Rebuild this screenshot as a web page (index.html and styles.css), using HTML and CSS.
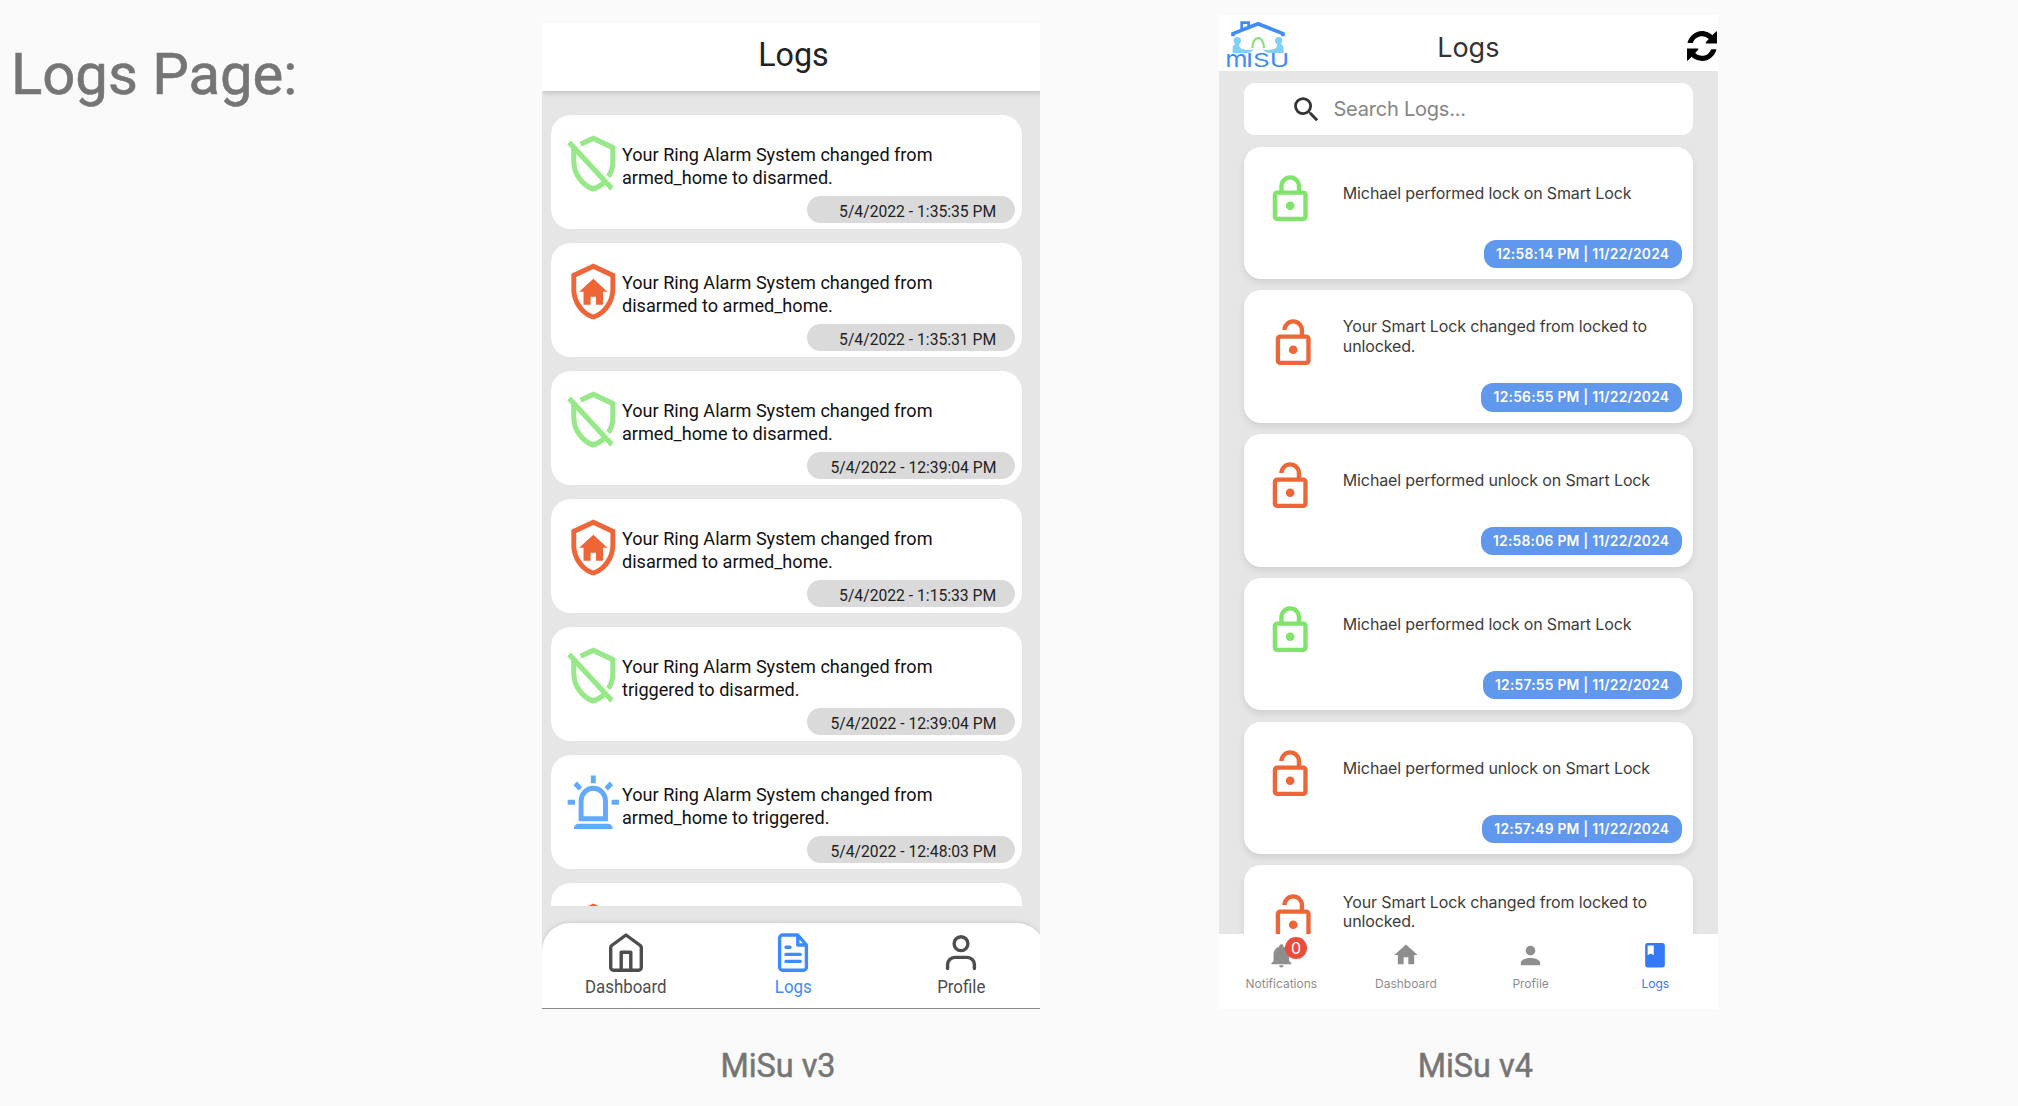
FILE: index.html
```html
<!DOCTYPE html>
<html lang="en">
<head>
<meta charset="utf-8">
<title>Logs Page</title>
<link rel="stylesheet" href="styles.css">
</head>
<body>
<svg class="defs" aria-hidden="true">
  <symbol id="shield-off" viewBox="0 0 24 24" preserveAspectRatio="none"><g fill="none" stroke="currentColor" stroke-width="2.1"><path d="M6.8 4.4 12 2.1l8 3.6v5.5c0 2-.6 4.1-1.8 5.9"/><path d="M4 5.2v5.9c0 4.8 3.4 9.5 8 10.9 1.9-.5 3.5-1.6 4.8-3"/><path d="M2.1 3.7 19.6 21.9"/></g></symbol>
  <symbol id="shield-home" viewBox="0 0 24 24" preserveAspectRatio="none"><path fill="currentColor" d="M21 11c0 5.55-3.84 10.74-9 12-5.16-1.26-9-6.45-9-12V5l9-4 9 4v6m-9 10c3.75-1 7-5.46 7-9.78V6.3l-7-3.12L5 6.3v4.92C5 15.54 8.25 20 12 21m0-14 5.8 5.1H16v5.1h-2.9v-3.1h-2.2v3.1H8v-5.1H6.2z"/></symbol>
  <symbol id="alarm" viewBox="0 0 24 24" preserveAspectRatio="none"><path fill="currentColor" d="M6 6.9 3.87 4.78 5.28 3.37 7.4 5.5 6 6.9M13 1v3h-2V1h2m7.13 3.78L18 6.9l-1.4-1.4 2.12-2.13 1.41 1.41M4.5 10.5v2h-3v-2h3m15 0h3v2h-3v-2M6 20h12a2 2 0 0 1 2 2H4a2 2 0 0 1 2-2m6-15a6 6 0 0 1 6 6v8H6v-8a6 6 0 0 1 6-6m0 2a4 4 0 0 0-4 4v6h8v-6a4 4 0 0 0-4-4z"/></symbol>
  <symbol id="lock" viewBox="0 0 24 24"><path fill="currentColor" d="M12 17a2 2 0 1 1 0-4 2 2 0 0 1 0 4m6 3V10H6v10h12m0-12a2 2 0 0 1 2 2v10a2 2 0 0 1-2 2H6a2 2 0 0 1-2-2V10c0-1.11.89-2 2-2h1V6a5 5 0 0 1 10 0v2h1m-6-5a3 3 0 0 0-3 3v2h6V6a3 3 0 0 0-3-3z"/></symbol>
  <symbol id="unlock" viewBox="0 0 24 24"><path fill="currentColor" d="M18 20V10H6v10h12m0-12a2 2 0 0 1 2 2v10a2 2 0 0 1-2 2H6a2 2 0 0 1-2-2V10a2 2 0 0 1 2-2h9V6a3 3 0 0 0-6 0H7a5 5 0 0 1 10 0v2h1m-6 9a2 2 0 1 1 0-4 2 2 0 0 1 0 4z"/></symbol>
</svg>

<main class="board">
  <h1 class="page-title">Logs Page:</h1>

  <figure class="version">
    <div class="device v3">
      <div class="v3-screen">
        <header class="v3-header"><h2 class="narrow">Logs</h2></header>
        <div class="v3-list">
          <article class="v3-card"><svg class="v3-icon green"><use href="#shield-off"/></svg><p class="v3-text">Your Ring Alarm System changed from<br>armed_home to disarmed.</p><time class="v3-time"><span>5/4/2022 - 1:35:35 PM</span></time></article>
          <article class="v3-card"><svg class="v3-icon orange"><use href="#shield-home"/></svg><p class="v3-text">Your Ring Alarm System changed from<br>disarmed to armed_home.</p><time class="v3-time"><span>5/4/2022 - 1:35:31 PM</span></time></article>
          <article class="v3-card"><svg class="v3-icon green"><use href="#shield-off"/></svg><p class="v3-text">Your Ring Alarm System changed from<br>armed_home to disarmed.</p><time class="v3-time"><span>5/4/2022 - 12:39:04 PM</span></time></article>
          <article class="v3-card"><svg class="v3-icon orange"><use href="#shield-home"/></svg><p class="v3-text">Your Ring Alarm System changed from<br>disarmed to armed_home.</p><time class="v3-time"><span>5/4/2022 - 1:15:33 PM</span></time></article>
          <article class="v3-card"><svg class="v3-icon green"><use href="#shield-off"/></svg><p class="v3-text">Your Ring Alarm System changed from<br>triggered to disarmed.</p><time class="v3-time"><span>5/4/2022 - 12:39:04 PM</span></time></article>
          <article class="v3-card"><svg class="v3-icon blue"><use href="#alarm"/></svg><p class="v3-text">Your Ring Alarm System changed from<br>armed_home to triggered.</p><time class="v3-time"><span>5/4/2022 - 12:48:03 PM</span></time></article>
          <article class="v3-card"><svg class="v3-icon orange"><use href="#shield-home"/></svg></article>
        </div>
        <nav class="v3-nav">
          <a class="v3-tab"><svg viewBox="-22 0 44 45"><path d="M-15.3 16.6v19.9a2.7 2.7 0 0 0 2.7 2.7h25.2a2.7 2.7 0 0 0 2.7-2.7V16.6q0-1.3-1-2.1L0 4l-14.3 10.5q-1 .8-1 2.1zM-4.8 39V21.3h9.6V39"/></svg><span class="narrow">Dashboard</span></a>
          <a class="v3-tab active"><svg viewBox="-22 0 44 45"><path d="M4.8 4h-15.2a3 3 0 0 0-3 3v29.2a3 3 0 0 0 3 3h20.8a3 3 0 0 0 3-3V14zM4.8 4v10h8.6M-7 16.3h4M-7 23.4H7.2M-7 30.4H7.2"/></svg><span class="narrow">Logs</span></a>
          <a class="v3-tab"><svg viewBox="-22 0 44 45"><circle cx="0" cy="12.7" r="6.9"/><path d="M-13.4 37.6v-4a7.2 7.2 0 0 1 7.2-7.2H6.2a7.2 7.2 0 0 1 7.2 7.2v4"/></svg><span class="narrow">Profile</span></a>
        </nav>
      </div>
    </div>
    <figcaption class="caption caption-v3">MiSu v3</figcaption>
  </figure>

  <figure class="version">
    <div class="device v4">
      <header class="v4-header">
        <svg class="logo" viewBox="48 60 190 147">
          <g fill="none" stroke="#3f8cf8"><path stroke-width="8" d="M95 92V68h21v12"/><path stroke-width="11" d="M69 109v-8l75-30 75 30v8"/></g>
          <path fill="none" stroke="#93e08c" stroke-width="7" d="M127 144c1-40 34-40 35 0"/>
          <g fill="#7fd0fa"><circle cx="82" cy="122" r="11"/><path d="M68 159v-17q2-9 9-10h10q2 13 10 15 20 5 34 1-6 11-24 11z"/><circle cx="206" cy="122" r="11"/><path d="M221 159v-17q-2-9-9-10h-10q-2 13-10 15-20 5-34 1 6 11 24 11z"/></g>
          <g class="wordmark"><text font-size="72" x="46" y="202" textLength="67" lengthAdjust="spacingAndGlyphs">m</text><text font-size="55" x="108" y="202" textLength="130" lengthAdjust="spacingAndGlyphs">ISU</text></g>
        </svg>
        <h2>Logs</h2>
        <svg class="refresh" viewBox="0 0 1536 1536"><path d="M1511 928C1440 1240 1130 1536 765 1536c-150 0-404-80-526-212L45 1510Q0 1536 0 1480V896h560q50 20 10 70l-150 155c84 85 220 145 348 145 200 0 390-115 470-338z"/><path d="M25 608C96 296 406 0 771 0c150 0 404 80 526 212l194-186q45-26 45 30v584H976q-50-20-10-70l150-155C1032 330 896 270 768 270c-200 0-390 115-470 338z"/></svg>
      </header>
      <div class="v4-list">
        <div class="search"><svg viewBox="0 0 24 24"><path d="M15.5 14h-.79l-.28-.27A6.47 6.47 0 0 0 16 9.5 6.5 6.5 0 1 0 9.5 16c1.61 0 3.09-.59 4.23-1.57l.27.28v.79l5 4.99L20.49 19l-4.99-5zm-6 0a4.5 4.5 0 1 1 0-9 4.5 4.5 0 0 1 0 9z"/></svg><span>Search Logs...</span></div>
        <article class="v4-card"><svg class="v4-icon lime"><use href="#lock"/></svg><p>Michael performed lock on Smart Lock</p><time>12:58:14 PM | 11/22/2024</time></article>
        <article class="v4-card"><svg class="v4-icon orange system"><use href="#unlock"/></svg><p>Your Smart Lock changed from locked to<br>unlocked.</p><time>12:56:55 PM | 11/22/2024</time></article>
        <article class="v4-card"><svg class="v4-icon orange"><use href="#unlock"/></svg><p>Michael performed unlock on Smart Lock</p><time>12:58:06 PM | 11/22/2024</time></article>
        <article class="v4-card"><svg class="v4-icon lime"><use href="#lock"/></svg><p>Michael performed lock on Smart Lock</p><time>12:57:55 PM | 11/22/2024</time></article>
        <article class="v4-card"><svg class="v4-icon orange"><use href="#unlock"/></svg><p>Michael performed unlock on Smart Lock</p><time>12:57:49 PM | 11/22/2024</time></article>
        <article class="v4-card"><svg class="v4-icon orange system"><use href="#unlock"/></svg><p>Your Smart Lock changed from locked to<br>unlocked.</p></article>
      </div>
      <nav class="v4-nav">
        <a class="v4-tab"><div class="glyph"><svg width="26.7" height="26.7" viewBox="0 0 24 24"><path d="M21 19v1H3v-1l2-2v-6c0-3.1 2.03-5.83 5-6.71V4a2 2 0 0 1 4 0v.29c2.97.88 5 3.61 5 6.71v6l2 2m-7 2a2 2 0 0 1-4 0"/></svg><b class="badge">0</b></div><span>Notifications</span></a>
        <a class="v4-tab"><div class="glyph"><svg width="28" height="28" viewBox="0 0 24 24"><path d="M10 20v-6h4v6h5v-8h3L12 3 2 12h3v8z"/></svg></div><span>Dashboard</span></a>
        <a class="v4-tab"><div class="glyph"><svg width="29" height="29" viewBox="0 0 24 24"><path d="M12 4a4 4 0 1 1 0 8 4 4 0 0 1 0-8m0 10c4.42 0 8 1.79 8 4v2H4v-2c0-2.21 3.58-4 8-4z"/></svg></div><span>Profile</span></a>
        <a class="v4-tab active"><div class="glyph"><svg width="20" height="24.6" viewBox="0 0 16 20"><path fill-rule="evenodd" d="M2 0h12a2 2 0 0 1 2 2v16a2 2 0 0 1-2 2H2a2 2 0 0 1-2-2V2a2 2 0 0 1 2-2zm0 2v8l2.5-1.5L7 10V2z"/></svg></div><span>Logs</span></a>
      </nav>
    </div>
    <figcaption class="caption caption-v4">MiSu v4</figcaption>
  </figure>
</main>
</body>
</html>
```
FILE: styles.css
```css
* { box-sizing: border-box; }
body { margin: 0; background: #fafafa; font-family: Roboto, sans-serif; overflow: hidden; }
h1, h2, p, figure { margin: 0; font-weight: 400; }
svg { display: block; flex: none; }
.defs { display: none; }

.board { display: grid; grid-template-columns: 542px 498px 499px; height: 1106px; }
.board .version:last-child { margin-left: 179px; width: 498.6px; }
.page-title { padding: 34px 0 0 11px; font-size: 58px; line-height: 80px; color: #757575; white-space: nowrap; -webkit-text-stroke: .6px #757575; }
.caption { height: 40px; line-height: 40px; font-size: 32.4px; color: #757575; -webkit-text-stroke: .5px #757575; text-align: center; }
.caption-v3 { margin-top: 37px; padding-right: 26px; }
.caption-v4 { margin-top: 36.7px; padding-left: 14px; }
.device { overflow: hidden; }
.narrow { transform: scaleX(.955); }

.green { color: #97e888; }
.lime { color: #7fe36c; }
.orange { color: #ee6538; }
.blue { color: #62aafc; }

/* version 3 */
.v3 { margin-top: 23px; height: 985.7px; background: #e6e6e6; border-bottom: 1px solid #8c8c8c; }
.v3-screen { width: 503px; height: 985px; display: flex; flex-direction: column; }
.v3-header { position: relative; height: 68px; flex: none; background: #fff; box-shadow: 0 1px 6px rgba(0,0,0,.22); }
.v3-header h2 { font-size: 33.8px; line-height: 64px; text-align: center; color: #222; }
.v3-list { height: 815px; flex: none; overflow: hidden; display: flex; flex-direction: column; gap: 13.7px; padding: 24px 0 0 9px; }
.v3-card { display: grid; grid-template-columns: 71px 1fr; grid-template-rows: 1fr 33px; width: 471px; height: 114.3px; flex: none; border-radius: 20px; background: #fff; }
.v3-icon { grid-row: 1 / 3; width: 58.6px; height: 61px; margin: 18.2px 0 0 12.5px; }
.v3-text { padding-top: 29px; font-size: 19px; line-height: 22.8px; margin-left: -.4px; color: #111; white-space: nowrap; transform: scaleX(.952); transform-origin: 0 0; }
.v3-time { grid-column: 2; justify-self: end; width: 208px; height: 27px; margin-right: 7px; padding-right: 19px; border-radius: 14px; background: #dadada; font-size: 16.4px; line-height: 32px; color: #222; text-align: right; }
.v3-time span { display: inline-block; transform: scaleX(.957); transform-origin: 100% 0; }
.v3-nav { position: relative; display: grid; grid-template-columns: repeat(3, 1fr); flex: none; height: 85px; margin-top: 17px; padding-top: 8px; border-radius: 28px 28px 0 0; background: #fff; box-shadow: 0 0 5px rgba(0,0,0,.15); }
.v3-tab { display: flex; flex-direction: column; align-items: center; color: #4d4d4d; }
.v3-tab svg { width: 44px; height: 45px; fill: none; stroke: currentColor; stroke-width: 3.4; stroke-linecap: round; stroke-linejoin: round; }
.v3-tab span { font-size: 17.7px; line-height: 23px; }
.v3-tab.active { color: #3b8cff; }

/* version 4 */
.v4 { display: flex; flex-direction: column; margin-top: 15px; height: 994px; background: #e6e6e6; font-family: Inter, sans-serif; }
.v4-header { display: grid; grid-template-columns: 72px 1fr 72px; height: 56px; flex: none; background: #fff; }
.v4-header h2 { font-size: 27px; line-height: 65px; text-align: center; color: #333; }
.logo { width: 63.3px; height: 49px; margin: 5px 0 0 7px; overflow: visible; }
.wordmark { font-family: Inter, sans-serif; fill: #3f8cf8; }
.refresh { justify-self: end; width: 30px; height: 30px; margin: 16px 1px 0 0; }
.v4-list { display: flex; flex-direction: column; gap: 11.4px; height: 863px; flex: none; padding: 12.2px 25px 0 25px; overflow: hidden; }
.search { display: flex; align-items: center; gap: 10.5px; height: 52px; flex: none; padding-left: 46px; border-radius: 11px; background: #fff; font-size: 20px; letter-spacing: -.22px; line-height: 52px; color: #858585; }
.search svg { width: 33px; height: 33px; fill: #333; }
.v4-card { display: grid; grid-template-columns: 98.8px 1fr; grid-template-rows: 93px 28.3px; height: 132.4px; flex: none; border-radius: 17px; background: #fff; box-shadow: 0 4px 7px rgba(0,0,0,.09); }
.v4-icon { grid-row: 1 / 3; width: 52.4px; height: 52.4px; margin: 26.3px 0 0 20.2px; }
.v4-icon.system { margin-left: 23.2px; }
.v4-card p { align-self: center; padding-top: .6px; font-size: 16px; line-height: 19.7px; letter-spacing: -.13px; color: #3c3c3c; white-space: nowrap; }
.v4-card time { grid-column: 2; justify-self: end; margin-right: 11px; padding: 0 12.3px; border-radius: 12px; background: #5f98ed; font-size: 13.8px; letter-spacing: .25px; line-height: 28.3px; height: 28.3px; font-weight: 600; color: #fff; }
.v4-nav { display: grid; grid-template-columns: repeat(4, 1fr); height: 75px; flex: none; padding-top: 4.8px; background: #fff; }
.v4-tab { display: flex; flex-direction: column; align-items: center; gap: 3.8px; font-size: 12px; line-height: 16px; color: #8e8e8e; }
.v4-tab svg { fill: currentColor; }
.v4-tab.active { color: #3579f6; }
.glyph { position: relative; display: grid; place-items: center; height: 33px; }
.badge { position: absolute; left: 17px; top: -1.5px; width: 22px; height: 22px; border-radius: 50%; background: #eb4d3d; color: #fff; font-size: 16px; font-weight: 400; line-height: 22px; text-align: center; }
```
